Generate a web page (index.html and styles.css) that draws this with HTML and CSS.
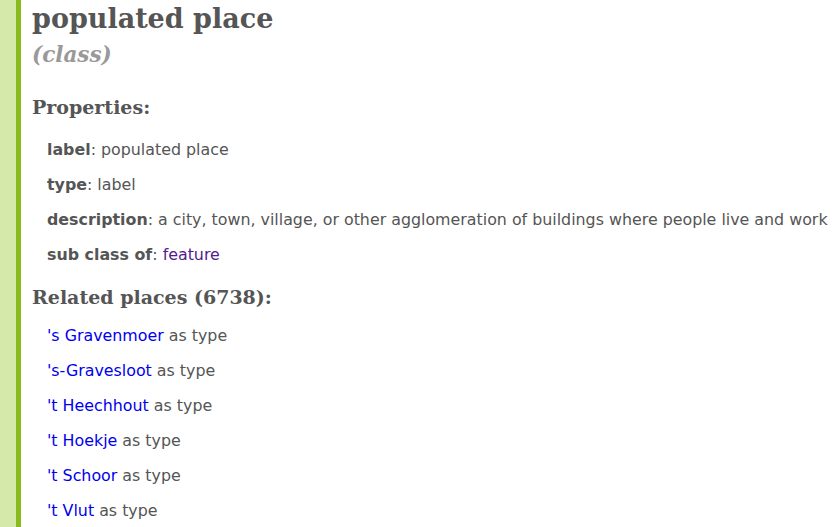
FILE: index.html
```html
<!DOCTYPE html>
<html>
<head>
<meta charset="utf-8">
<link rel="stylesheet" href="styles.css">
</head>
<body>
<div class="page">
  <div class="main">
    <h1 class="title">populated place</h1>
    <div class="kind">(class)</div>
    <h2 class="section first">Properties:</h2>
    <ul class="props">
      <li><b>label</b>: populated place</li>
      <li><b>type</b>: label</li>
      <li><b>description</b>: a city, town, village, or other agglomeration of buildings where people live and work</li>
      <li><b>sub class of</b>: <a class="visited" href="#">feature</a></li>
    </ul>
    <h2 class="section">Related places (6738):</h2>
    <ul class="props related">
      <li><a href="#">'s Gravenmoer</a> as type</li>
      <li><a href="#">'s-Gravesloot</a> as type</li>
      <li><a href="#">'t Heechhout</a> as type</li>
      <li><a href="#">'t Hoekje</a> as type</li>
      <li><a href="#">'t Schoor</a> as type</li>
      <li><a href="#">'t Vlut</a> as type</li>
    </ul>
  </div>
</div>
</body>
</html>
```

FILE: styles.css
```css
html, body {
  margin: 0;
  padding: 0;
  background: #fff;
  overflow: hidden;
}
.page {
  height: 527px;
  overflow: hidden;
}
.main {
  margin-left: 16px;
  border-left: 5px solid #8bba1f;
  box-shadow: -16px 0 0 #d5eaaa;
  padding-left: 11px;
  min-height: 527px;
  color: #555;
}
.title {
  font-family: "DejaVu Serif", serif;
  font-weight: bold;
  font-size: 27px;
  line-height: 38px;
  margin: 0;
}
.kind {
  font-family: "DejaVu Serif", serif;
  font-style: italic;
  font-weight: bold;
  font-size: 21.5px;
  line-height: 30px;
  padding-top: 2px;
  color: #999;
}
.section {
  font-family: "DejaVu Serif", serif;
  font-weight: bold;
  font-size: 19px;
  line-height: 30px;
  margin: 10px 0 0;
}
.section.first {
  margin-top: 22px;
}
.props {
  list-style: none;
  margin: 10px 0 0;
  padding: 0 0 0 15px;
  font-family: "DejaVu Sans", sans-serif;
  font-size: 15.85px;
  line-height: 35px;
  white-space: nowrap;
}
.props.related {
  margin-top: 6px;
}
.props b { color: #555; }
a { color: #0000ee; text-decoration: none; }
a.visited { color: #551a8b; }
```
